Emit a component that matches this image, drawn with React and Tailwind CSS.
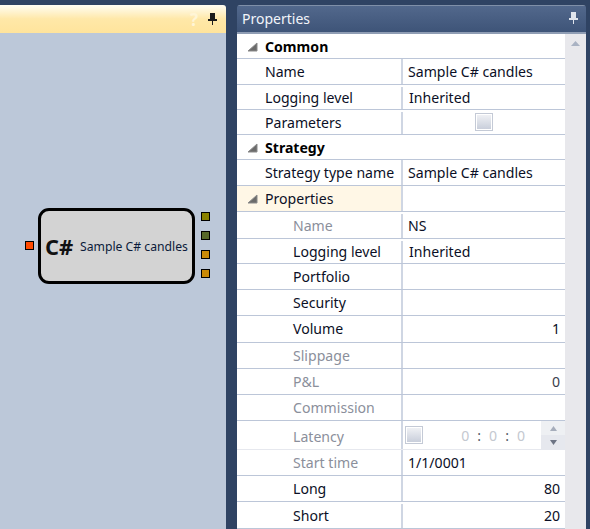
import React from 'react';

const rows = [
  { h: 25, label: 'Common', group: true, shift: true },
  { h: 26, label: 'Name', value: 'Sample C# candles' },
  { h: 25, label: 'Logging level', value: 'Inherited', inset: true, shift: true },
  { h: 25, label: 'Parameters', check: true, shift: true },
  { h: 25, label: 'Strategy', group: true, shift: true },
  { h: 26, label: 'Strategy type name', value: 'Sample C# candles' },
  { h: 26, label: 'Properties', arrow: true, hot: true },
  { h: 27, label: 'Name', value: 'NS', sub: true, muted: true, shift: true },
  { h: 25, label: 'Logging level', value: 'Inherited', sub: true, inset: true, shift: true },
  { h: 26, label: 'Portfolio', sub: true },
  { h: 26, label: 'Security', sub: true },
  { h: 27, label: 'Volume', value: '1', sub: true, right: true },
  { h: 26, label: 'Slippage', sub: true, muted: true },
  { h: 26, label: 'P&L', value: '0', sub: true, muted: true, right: true },
  { h: 26, label: 'Commission', sub: true, muted: true },
  { h: 29, label: 'Latency', sub: true, muted: true, latency: true, faint: true },
  { h: 26, label: 'Start time', value: '1/1/0001', sub: true, muted: true },
  { h: 26, label: 'Long', value: '80', sub: true, right: true },
  { h: 27, label: 'Short', value: '20', sub: true, right: true, shift: true },
];

function Arrow() {
  return (
    <svg width="11" height="10" viewBox="0 0 11 10" className="shrink-0">
      <path d="M10 1 L10 9 L1 9 Z" fill="#6b6b6b" stroke="#8a8a8a" strokeWidth="1" />
    </svg>
  );
}

function Pin({ color }) {
  return (
    <svg width="9" height="12" viewBox="0 0 9 12">
      <path d="M2 0h5v6h2v2H5v4H4V8H0V6h2z" fill={color} />
    </svg>
  );
}

function Check() {
  return <div className="w-[18px] h-[18px] shrink-0 border border-[#c4cad6] bg-gradient-to-b from-[#f2f3f6] to-[#c6ccd9] shadow-[inset_0_0_0_1px_#ffffff]" />;
}

function Row({ row }) {
  const labelColor = row.muted ? 'text-[#8b8f9b]' : 'text-[#0b0f26]';
  return (
    <div
      className={`flex shrink-0 border-b ${row.shift ? 'pt-[2px]' : ''} ${row.faint ? 'border-[#e6e8ee]' : 'border-[#bcc6d8]'}`}
      style={{ height: row.h }}
    >
      {row.group ? (
        <div className="flex items-center pl-[10px] gap-[7px] w-full">
          <Arrow />
          <span className="font-bold text-[#000000]">{row.label}</span>
        </div>
      ) : (
        <>
          <div className={`w-[164px] shrink-0 flex items-center ${row.hot ? 'bg-[#fff7e6]' : ''} ${row.sub ? 'pl-[56px]' : row.arrow ? 'pl-[10px] gap-[7px]' : 'pl-[28px]'} ${row.latency ? 'pt-[3px]' : ''} ${labelColor}`}>
            {row.arrow && <Arrow />}
            <span className="whitespace-nowrap">{row.label}</span>
          </div>
          <div className="w-[2px] shrink-0 bg-[#cfd6e3]" />
          <div className="flex-1 flex items-center min-w-0 text-[#0b0f26]">
            {row.check && <div className="w-full flex justify-center pr-[1px] pb-[2px]"><Check /></div>}
            {row.value && (
              <span className={`w-full whitespace-nowrap ${row.right ? 'text-right pr-[5px]' : row.inset ? 'pl-[6px]' : 'pl-[5px]'} ${row.label === 'P&L' ? 'text-[#3a3e4c]' : ''}`}>
                {row.value}
              </span>
            )}
            {row.latency && (
              <div className="flex items-center w-full h-full pl-[2px]">
                <Check />
                <div className="flex-1 flex justify-end gap-[8px] pr-[16px] pt-[1px] text-[#c4c8d0]">
                  <span>0</span><span className="text-[#555a68]">:</span><span>0</span><span className="text-[#555a68]">:</span><span>0</span>
                </div>
                <div className="w-[24px] h-full flex flex-col shrink-0">
                  <div className="flex-1 bg-[#eef0f3] flex items-center justify-center">
                    <svg width="7" height="5" viewBox="0 0 7 5"><path d="M3.500 0 L7 5 H0 Z" fill="#a6adbb" /></svg>
                  </div>
                  <div className="flex-1 bg-[#e6e8ee] flex items-center justify-center">
                    <svg width="7" height="5" viewBox="0 0 7 5"><path d="M0 0 H7 L3.500 5 Z" fill="#6d7484" /></svg>
                  </div>
                </div>
              </div>
            )}
          </div>
        </>
      )}
    </div>
  );
}

function Port({ color }) {
  return <div className="w-[9px] h-[9px] border border-black" style={{ background: color }} />;
}

export default function App() {
  return (
    <div className="w-[590px] h-[529px] overflow-hidden bg-[#2f4363] flex pt-[5px] gap-[11px] text-[14.1px] font-['Noto_Sans','Open_Sans',sans-serif]">
      {/* Diagram */}
      <div className="w-[226px] shrink-0 flex flex-col rounded-tr-[3px] overflow-hidden">
        <div className="h-[28px] shrink-0 bg-gradient-to-b from-[#fffdf2] via-[#ffe8a8] to-[#ffe49c] flex items-center justify-end gap-[10px] pr-[9px]">
          <span className="text-[#fff5d6] font-bold text-[17px] leading-none">?</span>
          <Pin color="#1b1b1b" />
        </div>
        <div className="flex-1 relative bg-[#bcc8d9]">
          <div className="absolute left-[25px] top-[208px]"><Port color="#ff4a00" /></div>
          <div className="absolute left-[38px] top-[175px] w-[157px] h-[76px] box-border border-[3px] border-black rounded-[11px] bg-[#d3d3d3] flex items-center pl-[4px]">
            <span className="font-bold text-[22px] leading-none text-[#111] w-[35px] font-['Open_Sans',sans-serif]">C#</span>
            <span className="text-[12.2px] whitespace-nowrap text-[#0b1a3a] pt-[2px]">Sample C# candles</span>
          </div>
          <div className="absolute left-[201px] top-[179px] flex flex-col gap-[10px]">
            <Port color="#8a8200" />
            <Port color="#56682a" />
            <Port color="#c98a08" />
            <Port color="#c98a08" />
          </div>
        </div>
      </div>

      {/* Properties */}
      <div className="w-[349px] shrink-0 flex flex-col rounded-t-[3px] overflow-hidden">
        <div className="h-[29px] shrink-0 bg-gradient-to-b from-[#52688c] to-[#3e5478] border-t border-t-[#7f8fa8] border-b-2 border-b-[#8f9db4] flex items-center justify-between pl-[5px] pr-[8px] pb-[2px]">
          <span className="text-[#f2f5fa] text-[14px]">Properties</span>
          <Pin color="#dfe4ec" />
        </div>
        <div className="flex-1 flex min-h-0 bg-white">
          <div className="w-[328px] shrink-0 flex flex-col">
            {rows.map((row, i) => <Row key={i} row={row} />)}
          </div>
          <div className="flex-1 bg-[#e8e8ec] flex justify-center pt-[7px]">
            <svg width="9" height="5" viewBox="0 0 9 5"><path d="M4.500 0 L9 5 H0 Z" fill="#a9b2c3" /></svg>
          </div>
        </div>
      </div>
    </div>
  );
}
